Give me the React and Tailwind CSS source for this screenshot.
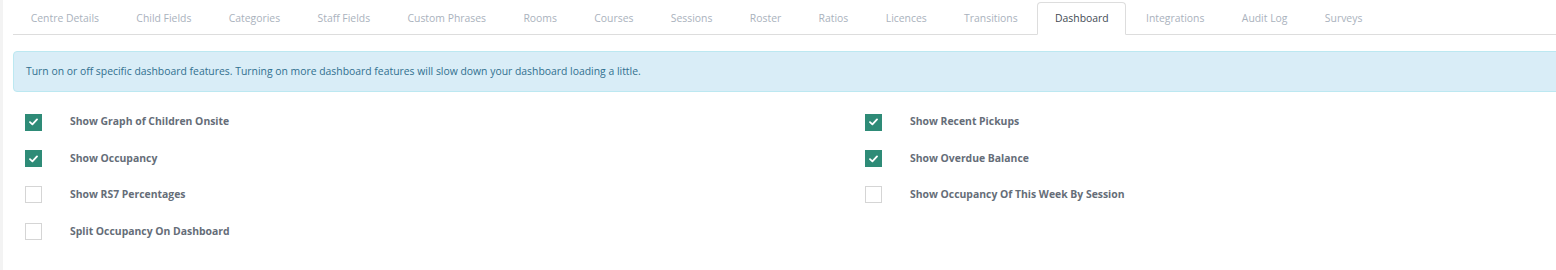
import React, { useState } from "react";

const tabs = [
  "Centre Details",
  "Child Fields",
  "Categories",
  "Staff Fields",
  "Custom Phrases",
  "Rooms",
  "Courses",
  "Sessions",
  "Roster",
  "Ratios",
  "Licences",
  "Transitions",
  "Dashboard",
  "Integrations",
  "Audit Log",
  "Surveys",
];

const leftOptions = [
  { key: "graph", label: "Show Graph of Children Onsite" },
  { key: "occupancy", label: "Show Occupancy" },
  { key: "rs7", label: "Show RS7 Percentages" },
  { key: "split", label: "Split Occupancy On Dashboard" },
];

const rightOptions = [
  { key: "pickups", label: "Show Recent Pickups" },
  { key: "overdue", label: "Show Overdue Balance" },
  { key: "weekSession", label: "Show Occupancy Of This Week By Session" },
];

const CheckRow = ({ label, checked, onToggle }) => (
  <label className="flex items-center h-[36.4px] cursor-pointer select-none">
    <button
      type="button"
      onClick={onToggle}
      className={`w-[17px] h-[17px] flex items-center justify-center shrink-0 border ${
        checked ? "bg-[#2e8b77] border-[#2e8b77]" : "bg-white border-[#d5d5d5]"
      }`}
    >
      {checked && (
        <svg width="9" height="8" viewBox="0 0 9 8" fill="none">
          <path
            d="M1 4.2L3.4 6.4L8 1.4"
            stroke="white"
            strokeWidth="1.8"
            strokeLinecap="round"
            strokeLinejoin="round"
          />
        </svg>
      )}
    </button>
    <span className="ml-[28px] text-[10.4px] font-bold text-[#656d78]">{label}</span>
  </label>
);

export default function App() {
  const [active, setActive] = useState("Dashboard");
  const [options, setOptions] = useState({
    graph: true,
    occupancy: true,
    rs7: false,
    split: false,
    pickups: true,
    overdue: true,
    weekSession: false,
  });

  const toggle = (key) => setOptions({ ...options, [key]: !options[key] });

  return (
    <div
      className="w-[1556px] h-[270px] overflow-hidden bg-white border-l-[3px] border-[#f3f3f3]"
      style={{ fontFamily: '"Open Sans", "Liberation Sans", sans-serif' }}
    >
      <div className="pl-[10px] w-[1700px]">
        <ul className="flex items-end h-[35px] border-b border-[#dddddd]">
          {tabs.map((t) => (
            <li key={t} className="mr-[2px] -mb-px">
              <button
                type="button"
                onClick={() => setActive(t)}
                className={`h-[33px] px-[16.7px] text-[10.4px] rounded-t-[4px] border ${
                  active === t
                    ? "bg-white border-[#dddddd] border-b-white text-[#434a54]"
                    : "border-transparent text-[#aab2bd]"
                }`}
              >
                {t}
              </button>
            </li>
          ))}
        </ul>

        <div className="mt-[16px] h-[41px] flex items-center px-[12px] bg-[#d9edf7] border border-[#bce8f1] rounded-l-[4px] text-[10.4px] text-[#31708f]">
          Turn on or off specific dashboard features. Turning on more dashboard
          features will slow down your dashboard loading a little.
        </div>

        <div className="mt-[12px] flex">
          <div className="w-[840px] px-[12px] flex flex-col">
            {leftOptions.map((o) => (
              <CheckRow
                key={o.key}
                label={o.label}
                checked={options[o.key]}
                onToggle={() => toggle(o.key)}
              />
            ))}
          </div>
          <div className="w-[840px] px-[12px] flex flex-col">
            {rightOptions.map((o) => (
              <CheckRow
                key={o.key}
                label={o.label}
                checked={options[o.key]}
                onToggle={() => toggle(o.key)}
              />
            ))}
          </div>
        </div>
      </div>
    </div>
  );
}
